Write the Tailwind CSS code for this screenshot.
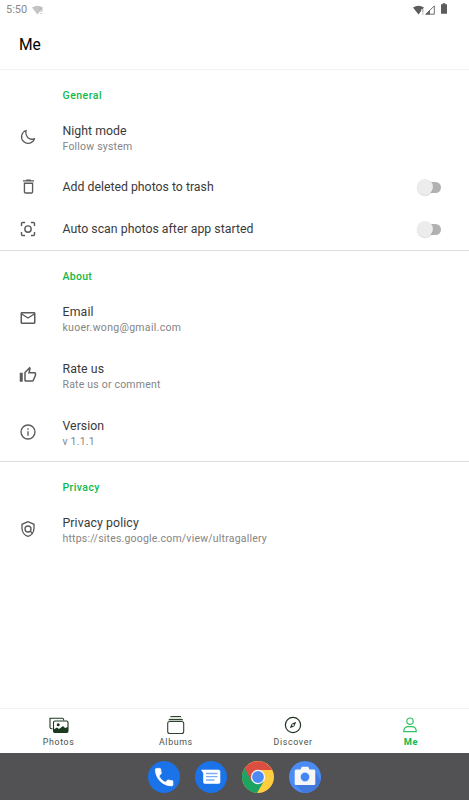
<!DOCTYPE html>
<html lang="en">
<head>
<meta charset="utf-8">
<title>Me</title>
<script src="https://cdn.jsdelivr.net/npm/@tailwindcss/browser@4"></script>
</head>
<body class="w-[469px] h-[800px] overflow-hidden bg-white flex flex-col font-['Roboto',sans-serif] text-[#3a3a3a]">
  <div class="h-[19px] shrink-0 flex items-center justify-between pl-[6px] pr-[22px] text-[11px] text-[#8a8a8a]">
    <div class="flex items-center gap-[5px]">
      <span class="leading-[19px]">5:50</span>
      <svg class="w-[12px] h-[10px]" viewBox="0 0 12 10"><path d="M0 2.5Q5.5-1 11 2.5L5.5 9.5Z" fill="#c4c4c4"/><path d="M7.5 4.6Q8 3.4 9.3 3.5Q10.8 4 10 5.3Q9 6 9 7M9 8v1" fill="none" stroke="#aaa" stroke-width="1"/></svg>
    </div>
    <div class="flex items-center">
      <svg class="w-[12px] h-[10px]" viewBox="0 0 12 10"><path d="M0 2.5Q5.5-1 11 2.5L9.5 4.3H8.2V6L5.5 9.4Z" fill="#5c5c5c"/><path d="M9.8 4v3.500M9.8 8.2v1.2" stroke="#aaa" stroke-width="1.2"/></svg>
      <svg class="w-[10px] h-[10px]" viewBox="0 0 10 10"><path d="M.8 9.2L9.300 .9v8.300Z" fill="none" stroke="#707070"/><path d="M.3 9.5L5 5v4.5Z" fill="#666"/></svg>
      <svg class="w-[6px] h-[11px] ml-[6px] -mt-[2px]" viewBox="0 0 6 11"><path d="M0 1.3h1.7V.3h2.6v1H6v9.4H0Z" fill="#5c5c5c"/></svg>
    </div>
  </div>
  <header class="h-[51px] shrink-0 border-b border-[#f3f3f3] px-[19px] text-[15.6px] leading-[52px] text-black">Me</header>

  <main class="flex-1 min-h-0">
    <section class="h-[181px] border-b border-[#dedede]">
      <h2 class="h-[40px] pl-[62.500px] pt-[17px] text-[10.500px] leading-[17px] font-medium tracking-[0.5px] text-[#10b94b]">General</h2>
      <div class="h-[56px] flex items-center">
        <div class="w-[62.500px] pl-[20px]"><svg class="size-[16px] -mt-[2px]" viewBox="0 0 16 16" fill="none" stroke="#5b5b5b" stroke-width="1.3" stroke-linejoin="round"><path d="M6.1 1.5A6.6 6.6 0 1 0 14.5 9.6Q10.8 11.2 8 8.7Q5.1 5.6 6.1 1.5Z"/></svg></div>
        <div class="pt-[2px]"><p class="text-[12.300px] leading-[16px] tracking-[0.02px]">Night mode</p><p class="text-[10.500px] leading-[16px] tracking-[0.2px] text-[#858585]">Follow system</p></div>
      </div>
      <div class="h-[42px] flex items-center pr-[28px]">
        <div class="w-[62.500px] pl-[18.500px]"><svg class="size-[19px] -mt-px" viewBox="0 0 24 24" fill="#5b5b5b"><path d="M6 19c0 1.100.9 2 2 2h8c1.100 0 2-.9 2-2V7H6v12ZM7.700 8.700h8.600v10.600H7.700V8.700ZM15.500 4l-1-1h-5l-1 1H5v1.800h14V4h-3.500Z"/></svg></div>
        <p class="flex-1 text-[12.300px] leading-[16px] tracking-[0px]">Add deleted photos to trash</p>
        <div class="w-[24px] h-[16px] flex items-center justify-end relative"><div class="w-[20px] h-[11px] rounded-full bg-[#b1b1b1]"></div><div class="absolute left-0 top-0 size-[15.500px] rounded-full bg-[#ececec] shadow-[0_1px_1px_rgba(0,0,0,0.15)]"></div></div>
      </div>
      <div class="h-[42px] flex items-center pr-[28px]">
        <div class="w-[62.500px] pl-[18px]"><svg class="size-[20px]" viewBox="0 0 24 24" fill="none" stroke="#5b5b5b" stroke-width="1.700"><path d="M8.500 4.200H5.500Q4.200 4.200 4.200 5.500V8.500M15.500 4.200h3Q19.800 4.200 19.800 5.500V8.500M8.500 19.800H5.500Q4.200 19.800 4.200 18.500V15.500M15.500 19.800h3Q19.800 19.800 19.800 18.500V15.500"/><circle cx="12" cy="12" r="3.800"/></svg></div>
        <p class="flex-1 text-[12.300px] leading-[16px] tracking-[0.02px]">Auto scan photos after app started</p>
        <div class="w-[24px] h-[16px] flex items-center justify-end relative"><div class="w-[20px] h-[11px] rounded-full bg-[#b1b1b1]"></div><div class="absolute left-0 top-0 size-[15.500px] rounded-full bg-[#ececec] shadow-[0_1px_1px_rgba(0,0,0,0.15)]"></div></div>
      </div>
    </section>

    <section class="h-[211px] border-b border-[#dedede]">
      <h2 class="h-[40px] pl-[62.500px] pt-[17px] text-[10.500px] leading-[17px] font-medium tracking-[0.3px] text-[#10b94b]">About</h2>
      <div class="h-[57px] flex items-center">
        <div class="w-[62.500px] pl-[19px]"><svg class="size-[18px] -mt-[3px]" viewBox="0 0 24 24" fill="#5b5b5b"><path d="M22 6c0-1.100-.9-2-2-2H4c-1.100 0-2 .9-2 2v12c0 1.100.9 2 2 2h16c1.100 0 2-.9 2-2V6Zm-2 0l-8 5-8-5h16Zm0 12H4V8l8 5 8-5v10Z"/></svg></div>
        <div><p class="text-[12.300px] leading-[16px] tracking-[0.15px]">Email</p><p class="text-[10.500px] leading-[16px] tracking-[0.3px] text-[#858585]">kuoer.wong@gmail.com</p></div>
      </div>
      <div class="h-[57px] flex items-center">
        <div class="w-[62.500px] pl-[19px]"><svg class="size-[18px] -mt-[3px]" viewBox="0 0 24 24" fill="#5b5b5b"><path d="M9 21h9c.83 0 1.540-.5 1.840-1.220l3.020-7.050c.09-.23.14-.47.14-.73v-2c0-1.100-.9-2-2-2h-6.310l.95-4.570.03-.32c0-.41-.17-.79-.44-1.060L14.170 1 7.580 7.590C7.220 7.950 7 8.450 7 9v10c0 1.100.9 2 2 2ZM9 9l4.340-4.340L12 10h9v2l-3 7H9V9ZM1 9h4v12H1Z"/></svg></div>
        <div><p class="text-[12.300px] leading-[16px] tracking-[0.1px]">Rate us</p><p class="text-[10.500px] leading-[16px] tracking-[0.2px] text-[#858585]">Rate us or comment</p></div>
      </div>
      <div class="h-[57px] flex items-center">
        <div class="w-[62.500px] pl-[19px]"><svg class="size-[18px] -mt-[3px]" viewBox="0 0 24 24" fill="none" stroke="#5b5b5b" stroke-width="1.800"><circle cx="12" cy="12" r="9.300"/><path d="M12 11v6M12 7v2"/></svg></div>
        <div><p class="text-[12.300px] leading-[16px] tracking-[0.02px]">Version</p><p class="text-[10.500px] leading-[16px] tracking-[0.2px] text-[#858585]">v 1.1.1</p></div>
      </div>
    </section>

    <section>
      <h2 class="h-[40px] pl-[62.500px] pt-[17px] text-[10.500px] leading-[17px] font-medium tracking-[0.4px] text-[#10b94b]">Privacy</h2>
      <div class="h-[57px] flex items-center">
        <div class="w-[62.500px] pl-[19px]"><svg class="size-[18px] -mt-[3px]" viewBox="0 0 24 24" fill="none" stroke="#5b5b5b" stroke-width="1.800"><path d="M12 2.200L4 5.700V11c0 4.900 3.400 9.500 8 10.800 4.600-1.300 8-5.900 8-10.800V5.700Z"/><circle cx="12" cy="12" r="4"/><path d="M14.800 14.800L18.300 18.300"/></svg></div>
        <div><p class="text-[12.300px] leading-[16px] tracking-[0.1px]">Privacy policy</p><p class="text-[10.500px] leading-[16px] tracking-[0.2px] text-[#858585]">https://sites.google.com/view/ultragallery</p></div>
      </div>
    </section>
  </main>

  <nav class="h-[45px] shrink-0 border-t border-[#f3f3f3] grid grid-cols-4 text-[8.800px] leading-[12px] tracking-[0.650px] text-[#4a524b]">
    <a class="flex flex-col items-center pt-[6px] gap-[1px]">
      <svg class="w-[20px] h-[20px]" viewBox="0 0 20 20" fill="none" stroke="#1b3a1f" stroke-width="1.1"><path d="M3.500 13.800H2.700Q1 13.800 1 12.200V3.300H13.500Q14.800 3.300 14.800 5.500"/><rect x="4.500" y="6" width="14.500" height="11.500" rx="1.500"/><circle cx="9.200" cy="9.800" r="1.500" fill="#1b3a1f" stroke="none"/><path d="M4.500 14.500L8 12.500L10 14L14 11L16 13L19 12V16.500Q19 17.500 18 17.500H5.500Q4.500 17.500 4.500 16.500Z" fill="#1b3a1f" stroke="none"/></svg>
      <span>Photos</span></a>
    <a class="flex flex-col items-center pt-[6px] gap-[1px]">
      <svg class="w-[20px] h-[20px]" viewBox="0 0 20 20" fill="none" stroke="#2c4430" stroke-width="1.100"><path d="M4.500 1.500H15M2.800 4.500H16.700"/><path d="M3.500 3H16M2.500 5.500H17" stroke="#c0c8c1"/><rect x="1.700" y="6.500" width="16" height="12" rx="2"/></svg>
      <span>Albums</span></a>
    <a class="flex flex-col items-center pt-[6px] gap-[1px]">
      <svg class="w-[20px] h-[20px]" viewBox="0 0 20 20" fill="none" stroke="#1f3522" stroke-width="1.200"><circle cx="10" cy="10" r="7.600"/><path d="M13.200 6.800L11.300 11.300L6.800 13.200L8.700 8.700Z" fill="#1f3522" stroke="none"/><circle cx="10" cy="10" r=".9" fill="#fff" stroke="none"/></svg>
      <span>Discover</span></a>
    <a class="flex flex-col items-center pt-[6px] gap-[1px] text-[#10b94b] font-bold">
      <svg class="w-[20px] h-[20px]" viewBox="0 0 20 20" fill="none" stroke="#2fc263" stroke-width="1.200"><circle cx="10" cy="6.200" r="3.200"/><path d="M3.700 16.700Q3.700 11.700 8.500 11.700H11.500Q16.300 11.700 16.300 16.700Z" stroke-linejoin="round"/></svg>
      <span class="text-[9.300px] pl-px">Me</span></a>
  </nav>

  <footer class="h-[47px] shrink-0 bg-[#525154] flex items-center justify-center gap-[15px]">
    <svg class="size-[32px]" viewBox="0 0 32 32"><circle cx="16" cy="16" r="16" fill="#1a73e8"/><path transform="translate(4.500 4.500) scale(.97)" d="M6.620 10.790c1.440 2.830 3.760 5.140 6.590 6.590l2.200-2.200c.27-.27.67-.36 1.020-.24 1.120.37 2.330.57 3.570.57.55 0 1 .45 1 1V20c0 .55-.45 1-1 1-9.390 0-17-7.610-17-17 0-.55.45-1 1-1h3.500c.55 0 1 .45 1 1 0 1.250.2 2.450.57 3.570.11.35.03.74-.25 1.020l-2.200 2.200Z" fill="#fff" stroke="#fff" stroke-width=".8" stroke-linejoin="round"/></svg>
    <svg class="size-[32px]" viewBox="0 0 32 32"><circle cx="16" cy="16" r="16" fill="#1a73e8"/><path d="M6.500 9H23.500Q25 9 25 10.500V21Q25 22.500 23.500 22.500H10Q8.500 22.500 8.500 21V12Z" fill="#fff" stroke="#fff" stroke-width=".6" stroke-linejoin="round"/><path d="M11 12.500H22.500M11 15.700H22.500M11 19H19.500" stroke="#7eaef2" stroke-width="1.300"/></svg>
    <svg class="size-[32px]" viewBox="0 0 32 32"><circle cx="16" cy="16" r="16" fill="#ffcd40"/><path d="M16 16L2.800 7A16 16 0 0 0 15 32L22 20Z" fill="#1da362"/><path d="M2.800 7A16 16 0 0 1 30.200 9H16L9 19.500Z" fill="#dc4e41"/><circle cx="16" cy="16" r="7.200" fill="#f5f5f5"/><circle cx="16" cy="16" r="5.900" fill="#4c8bf5"/></svg>
    <svg class="size-[32px]" viewBox="0 0 32 32"><circle cx="16" cy="16" r="16" fill="#4b8bf4"/><path d="M6.500 24L14 31.800A16 16 0 0 0 31.500 20L25.500 9Z" fill="#4279dc"/><path d="M7 8.500H11.500L12.800 5.800H19.200L20.500 8.500H25Q26.300 8.500 26.300 10V22.500Q26.300 24 25 24H7Q5.700 24 5.700 22.500V10Q5.700 8.500 7 8.500Z" fill="#f7f7f7"/><circle cx="16" cy="16" r="5.200" fill="#d6e3fa"/><circle cx="16" cy="16" r="4.200" fill="#4284f3"/></svg>
  </footer>
</body>
</html>
